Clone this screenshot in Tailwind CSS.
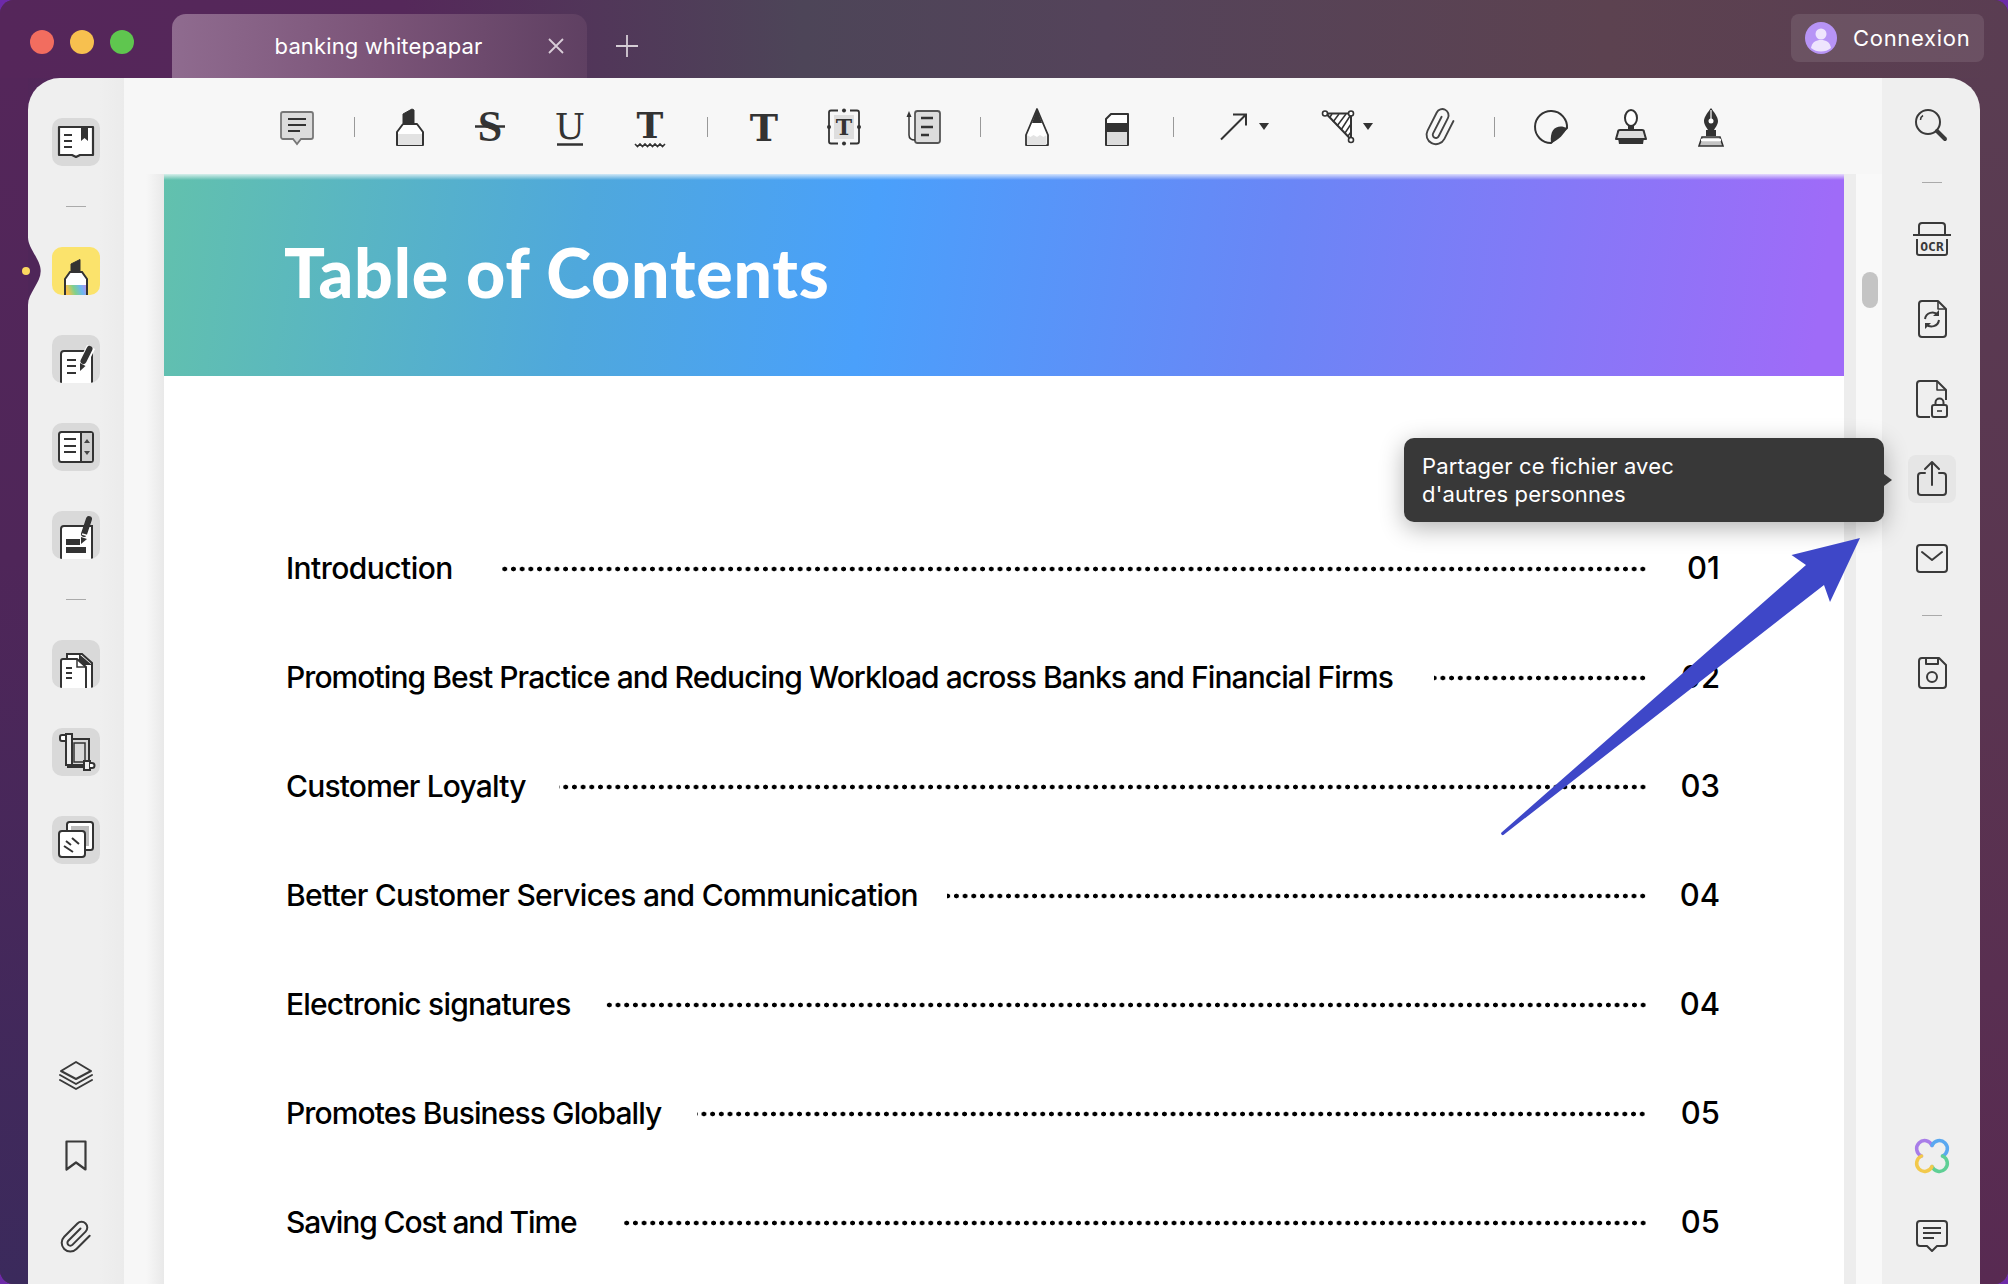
<!DOCTYPE html>
<html lang="en">
<head>
  <meta charset="UTF-8" />
  <title>banking whitepapar</title>
  <script src="https://cdn.jsdelivr.net/npm/@tailwindcss/browser@4"></script>
</head>
<body class="w-[2008px] h-[1284px] overflow-hidden bg-[#6d2aa8] font-['Inter',sans-serif]">
<div class="relative w-full h-full rounded-[14px] overflow-hidden flex flex-col bg-[#52265a]">

  <!-- title bar -->
  <header class="h-[78px] shrink-0 flex items-start bg-[linear-gradient(90deg,#55265a_0%,#55285a_20%,#4d4558_40%,#54435a_55%,#5c4250_80%,#5a3d52_100%)]">
    <div class="flex gap-[16px] mt-[30px] ml-[30px]">
      <span class="w-[24px] h-[24px] rounded-full bg-[#f26d5f]"></span>
      <span class="w-[24px] h-[24px] rounded-full bg-[#f7c04f]"></span>
      <span class="w-[24px] h-[24px] rounded-full bg-[#5fc64f]"></span>
    </div>
    <div class="relative ml-[38px] mt-[14px] w-[415px] h-[64px] rounded-t-[14px] bg-[linear-gradient(90deg,#8f6b8f_0%,#7b5478_50%,#5f4062_100%)] flex items-center justify-center">
      <span class="text-white text-[22px] leading-none -mt-[1px] -ml-[2px] tracking-[0.12px]">banking whitepapar</span>
      <svg class="absolute left-[375px] top-[22px]" width="18" height="20" viewBox="0 0 18 20" fill="none" stroke="#d9cdd8" stroke-width="1.8"><path d="M2 3l14 14M16 3L2 17"/></svg>
    </div>
    <svg class="ml-[28px] mt-[34px]" width="24" height="24" viewBox="0 0 24 24" fill="none" stroke="#d5cdd5" stroke-width="1.8"><path d="M12 1v22M1 12h22"/></svg>
    <div class="ml-auto mr-[24px] mt-[14px] w-[193px] h-[48px] rounded-[8px] bg-white/10 flex items-center pl-[14px]">
      <svg width="32" height="32" viewBox="0 0 32 32"><circle cx="16" cy="16" r="16" fill="#b794f6"/><circle cx="16" cy="12" r="5.5" fill="#eee4fd"/><path d="M6 26c1-6 5-8 10-8s9 2 10 8a16 16 0 0 1-20 0z" fill="#eee4fd"/></svg>
      <span class="ml-[16px] text-white text-[22px] tracking-[0.7px]">Connexion</span>
    </div>
  </header>

  <div class="flex-1 flex min-h-0 bg-[linear-gradient(90deg,#52265a,#5a3d52)]">
    <div class="w-[28px] shrink-0 bg-[linear-gradient(180deg,#54265a_0%,#4f2659_40%,#3b2a5c_100%)]"></div>

    <div class="flex-1 flex min-w-0 rounded-t-[32px] overflow-hidden">
      <!-- left sidebar -->
      <aside class="w-[96px] shrink-0 bg-[linear-gradient(90deg,#efefef_75%,#ebebeb_100%)] flex flex-col items-center pt-[40px] pb-[23px]">
        <div class="flex flex-col items-center gap-[40px]">
          <div class="w-[48px] h-[48px] rounded-[10px] bg-[#d9d9d9] overflow-hidden">
            <svg width="48" height="48" viewBox="0 0 48 48"><path d="M7 9h34v28H28l-4 2-4-2H7z" fill="#fff" stroke="#333" stroke-width="2.2" stroke-linejoin="round"/><path d="M12 17h8M12 23h8M12 29h8" stroke="#333" stroke-width="2.2"/><path d="M29 9v14l3.5-3 3.5 3V9z" fill="#333"/></svg>
          </div>
          <div class="w-[20px] h-[1px] bg-[#aaaaaa]"></div>
          <div class="w-[48px] h-[48px] rounded-[10px] bg-[#fbe36c] overflow-hidden">
            <svg width="48" height="48" viewBox="0 0 48 48"><defs><linearGradient id="rb" x1="0" x2="1" y1="0.2" y2="0"><stop offset="0" stop-color="#f5c04d"/><stop offset=".35" stop-color="#7fd18c"/><stop offset=".7" stop-color="#6cb7f0"/><stop offset="1" stop-color="#b390f0"/></linearGradient></defs><path d="M13 50V32l5-7h12l5 7v18z" fill="#fff" stroke="#333" stroke-width="2"/><rect x="14" y="38" width="20" height="11" fill="url(#rb)"/><path d="M19 24v-7l9-4.500v11.500z" fill="#333" stroke="#333" stroke-linejoin="round"/></svg>
          </div>
          <div class="w-[48px] h-[48px] rounded-[10px] bg-[#d9d9d9] overflow-hidden">
            <svg width="48" height="48" viewBox="0 0 48 48"><path d="M9 50V19a3 3 0 0 1 3-3h28v34z" fill="#fff" stroke="#333" stroke-width="2"/><path d="M15 25h9M15 31h9M15 38h9" stroke="#333" stroke-width="2"/><path d="M39 12l-8 16" stroke="#fff" stroke-width="9"/><path d="M37.500 14l-6 12" stroke="#333" stroke-width="6" stroke-linecap="round"/><path d="M28 28l5.500 3-5.500 5z" fill="#333"/></svg>
          </div>
          <div class="w-[48px] h-[48px] rounded-[10px] bg-[#d9d9d9] overflow-hidden">
            <svg width="48" height="48" viewBox="0 0 48 48"><rect x="7" y="9" width="34" height="30" rx="2.500" fill="#fff" stroke="#333" stroke-width="2"/><path d="M29 10h11v28H29z" fill="#cfcfcf"/><path d="M29 9v30" stroke="#333" stroke-width="2"/><path d="M12 16h12M12 23h12M12 29h12" stroke="#333" stroke-width="2"/><path d="M35 16l3 4h-6zM35 32l-3-4h6z" fill="#444"/></svg>
          </div>
          <div class="w-[48px] h-[48px] rounded-[10px] bg-[#d9d9d9] overflow-hidden">
            <svg width="48" height="48" viewBox="0 0 48 48"><path d="M9 50V18a3 3 0 0 1 3-3h28v35z" fill="#fff" stroke="#333" stroke-width="2"/><path d="M14 28h14v6H14zM14 36h20v6H14z" fill="#333"/><path d="M37 8l-5 15" stroke="#333" stroke-width="6" stroke-linecap="round"/><path d="M29 26l6 2-6 5z" fill="#333"/><path d="M30 23l7 2" stroke="#fff" stroke-width="1.500"/></svg>
          </div>
          <div class="w-[20px] h-[1px] bg-[#aaaaaa]"></div>
          <div class="w-[48px] h-[48px] rounded-[10px] bg-[#d9d9d9] overflow-hidden">
            <svg width="48" height="48" viewBox="0 0 48 48"><path d="M15 50V14h15l10 9v27z" fill="#fff" stroke="#333" stroke-width="2"/><path d="M27 14l13 11H27z" fill="#333"/><path d="M9 50V21a2 2 0 0 1 2-2h14l9 8v23z" fill="#fff" stroke="#333" stroke-width="2"/><path d="M25 19v8h9" fill="none" stroke="#333" stroke-width="1.500"/><path d="M14 28h6M14 33h6M14 38h6" stroke="#333" stroke-width="2"/></svg>
          </div>
          <div class="w-[48px] h-[48px] rounded-[10px] bg-[#d9d9d9] overflow-hidden">
            <svg width="48" height="48" viewBox="0 0 48 48" fill="none" stroke="#333" stroke-width="2"><path d="M8 9a2 2 0 0 1 2-2h6v6h-6a2 2 0 0 1-2-2z" fill="#fff"/><path d="M19 11h18v28H15" /><path d="M22 15h11v19H22z" stroke-width="1.500"/><path d="M14 6h6v31h-6z" fill="#efefef"/><path d="M32 33h6v9h-6z" fill="#efefef"/><path d="M38 35h2a2 2 0 0 1 0 5h-2" fill="#fff"/><path d="M20 37h12" /></svg>
          </div>
          <div class="w-[48px] h-[48px] rounded-[10px] bg-[#d9d9d9] overflow-hidden">
            <svg width="48" height="48" viewBox="0 0 48 48" fill="none" stroke="#333" stroke-width="2"><rect x="15" y="6" width="26" height="28" rx="2.500" fill="#fff"/><rect x="19" y="10" width="18" height="20" fill="#bdbdbd" stroke="none"/><rect x="7" y="15" width="26" height="26" rx="3" fill="#fff"/><path d="M14 25l5 4M12 30l9 6M20 22l7 6"/></svg>
          </div>
        </div>
        <div class="mt-auto flex flex-col items-center gap-[32px]">
          <svg width="48" height="48" viewBox="0 0 48 48" fill="none" stroke="#3a3a3a" stroke-width="2" stroke-linejoin="round"><path d="M24 9l15 9-15 8-15-8z"/><path d="M8 22l16 9 16-9M8 27l16 9 16-9" stroke-linecap="round"/></svg>
          <svg width="48" height="48" viewBox="0 0 48 48" fill="none" stroke="#3a3a3a" stroke-width="2.200" stroke-linejoin="round"><path d="M14.500 8.500h19v28L24 29.500l-9.500 7z"/></svg>
          <svg width="48" height="48" viewBox="0 0 24 24" fill="none" stroke="#3a3a3a" stroke-width="1.400" stroke-linecap="round" stroke-linejoin="round"><g transform="translate(3.400 3.400) scale(.72)"><path d="M21.440 11.050l-9.190 9.190a6 6 0 0 1-8.490-8.490l9.190-9.190a4 4 0 0 1 5.660 5.660l-9.200 9.190a2 2 0 0 1-2.830-2.830l8.490-8.480"/></g></svg>
        </div>
      </aside>

      <!-- main column -->
      <div class="flex-1 min-w-0 flex flex-col bg-[#f7f7f7]">
        <!-- annotation toolbar -->
        <div class="relative z-10 h-[96px] shrink-0 flex items-center pl-[133px] pt-[2px] bg-[#f7f7f7]">
          <div class="w-[80px] flex justify-center">
            <svg width="48" height="48" viewBox="0 0 48 48"><path d="M10 9h28a2 2 0 0 1 2 2v23a2 2 0 0 1-2 2H28l-4 5-4-5H10a2 2 0 0 1-2-2V11a2 2 0 0 1 2-2z" fill="#dcdcdc" stroke="#777" stroke-width="1.800"/><path d="M15 16h18M15 22h18M15 28h12" stroke="#333" stroke-width="2"/></svg>
          </div>
          <div class="ml-[17px] w-[1px] h-[20px] bg-[#999]"></div>
          <div class="ml-[15px] w-[80px] flex justify-center">
            <svg width="48" height="48" viewBox="0 0 48 48"><path d="M11 42V29l6-8h14l6 8v13z" fill="#fff" stroke="#333" stroke-width="2" stroke-linejoin="round"/><path d="M12 31h24v11H12z" fill="#e3e3e3"/><path d="M11 30v12M37 30v12" stroke="#333" stroke-width="2"/><path d="M17 20v-9l9-5 2 1v13z" fill="#333" stroke="#333" stroke-linejoin="round"/></svg>
          </div>
          <div class="w-[80px] flex justify-center">
            <svg width="48" height="48" viewBox="0 0 48 48"><text x="24" y="38" text-anchor="middle" font-family="Liberation Serif" font-weight="700" font-size="44" fill="#333">S</text><path d="M9 23.500h30" stroke="#333" stroke-width="2.500"/></svg>
          </div>
          <div class="w-[80px] flex justify-center">
            <svg width="48" height="48" viewBox="0 0 48 48"><text x="24" y="36" text-anchor="middle" font-family="DejaVu Serif" font-size="36" fill="#333">U</text><path d="M11 41.500h26" stroke="#333" stroke-width="2.500"/></svg>
          </div>
          <div class="w-[80px] flex justify-center">
            <svg width="48" height="48" viewBox="0 0 48 48"><text x="24" y="35" text-anchor="middle" font-family="DejaVu Serif" font-size="36" fill="#333" font-weight="700">T</text><path d="M9 41l2.500 2.500 2.500-2.500 2.500 2.500 2.500-2.500 2.500 2.500 2.500-2.500 2.500 2.500 2.500-2.500 2.500 2.500 2.500-2.500 2.500 2.500 2.500-2.500" fill="none" stroke="#333" stroke-width="1.600"/></svg>
          </div>
          <div class="ml-[17px] w-[1px] h-[20px] bg-[#999]"></div>
          <div class="ml-[16px] w-[80px] flex justify-center">
            <svg width="48" height="48" viewBox="0 0 48 48"><text x="24" y="37.500" text-anchor="middle" font-family="DejaVu Serif" font-size="38" fill="#333" font-weight="700">T</text></svg>
          </div>
          <div class="w-[80px] flex justify-center">
            <svg width="48" height="48" viewBox="0 0 48 48"><path d="M18 7.500h-7a2 2 0 0 0-2 2v29a2 2 0 0 0 2 2h7M30 7.500h7a2 2 0 0 1 2 2v29a2 2 0 0 1-2 2h-7" fill="none" stroke="#333" stroke-width="1.800"/><rect x="14" y="12" width="20" height="24" fill="#dedede"/><circle cx="24" cy="7.500" r="2" fill="#333"/><circle cx="24" cy="40.500" r="2" fill="#333"/><circle cx="9" cy="24" r="2" fill="#333"/><circle cx="39" cy="24" r="2" fill="#333"/><text x="24" y="32" text-anchor="middle" font-family="DejaVu Serif" font-size="22" fill="#333" font-weight="700">T</text></svg>
          </div>
          <div class="w-[80px] flex justify-center">
            <svg width="48" height="48" viewBox="0 0 48 48"><rect x="15" y="8" width="25" height="32" rx="2.500" fill="#dcdcdc" stroke="#555" stroke-width="1.800"/><path d="M21 15h12M21 24h12M21 32h8" stroke="#333" stroke-width="2.400"/><path d="M9 13v19q0 5 6 5" fill="none" stroke="#333" stroke-width="1.500"/><path d="M9 8l-2.500 6h5z" fill="#333"/></svg>
          </div>
          <div class="ml-[16px] w-[1px] h-[20px] bg-[#999]"></div>
          <div class="ml-[16px] w-[80px] flex justify-center">
            <svg width="48" height="48" viewBox="0 0 48 48"><path d="M13 42V32l11-26 11 26v10z" fill="#fff" stroke="#333" stroke-width="1.800" stroke-linejoin="round"/><path d="M14 32l3.500 2 3-2 3.500 2 3-2 3.500 2 3-2v10H14z" fill="#e3e3e3"/><path d="M19 20L24 6l5 14z" fill="#333"/></svg>
          </div>
          <div class="w-[80px] flex justify-center">
            <svg width="48" height="48" viewBox="0 0 48 48"><path d="M13 42V16l5-5h17v31z" fill="#fff" stroke="#333" stroke-width="2" stroke-linejoin="round"/><path d="M14 29h20v13H14z" fill="#dcdcdc"/><path d="M13 20h22v9H13z" fill="#333"/><path d="M13 29v13M35 29v13" stroke="#333" stroke-width="2"/></svg>
          </div>
          <div class="ml-[16px] w-[1px] h-[20px] bg-[#999]"></div>
          <svg class="ml-[42px]" width="60" height="48" viewBox="0 0 60 48" fill="none"><path d="M5 36.500L30 11.500M17 11.500h13v11" stroke="#333" stroke-width="2"/><path d="M43 20h10l-5 7z" fill="#333"/></svg>
          <svg class="ml-[44px]" width="60" height="48" viewBox="0 0 60 48" fill="none"><path d="M6 10.500h25v26z" fill="#fff"/><path d="M12 11l-2 3M19 11l-6 8M26 11l-9 12M30 13L21 27M31 21l-6 9M31 29l-3 4" stroke="#333" stroke-width="1.500"/><path d="M6 10.500h25v26z" stroke="#333" stroke-width="2" stroke-linejoin="round"/><circle cx="5" cy="10.500" r="2.500" fill="#fff" stroke="#333" stroke-width="1.600"/><circle cx="31" cy="10.500" r="2.500" fill="#fff" stroke="#333" stroke-width="1.600"/><circle cx="31" cy="37" r="2.500" fill="#fff" stroke="#333" stroke-width="1.600"/><path d="M43 20h10l-5 7z" fill="#333"/></svg>
          <div class="ml-[20px] w-[80px] flex justify-center">
            <svg width="48" height="48" viewBox="0 0 24 24" fill="none" stroke="#444" stroke-width="1.200" stroke-linecap="round" stroke-linejoin="round"><g transform="rotate(-18 12 12) translate(2.600 2.600) scale(.78)"><path d="M21.440 11.050l-9.190 9.190a6 6 0 0 1-8.490-8.490l9.190-9.190a4 4 0 0 1 5.660 5.660l-9.200 9.190a2 2 0 0 1-2.830-2.830l8.490-8.480"/></g></svg>
          </div>
          <div class="ml-[14px] w-[1px] h-[20px] bg-[#999]"></div>
          <div class="ml-[16px] w-[80px] flex justify-center">
            <svg width="48" height="48" viewBox="0 0 48 48"><path d="M40 25A16 16 0 1 0 24 40z" fill="none" stroke="#333" stroke-width="2"/><path d="M24 40c8-3 13-9 16-15-8-4-18-1-16 15z" fill="#333"/></svg>
          </div>
          <div class="w-[80px] flex justify-center">
            <svg width="48" height="48" viewBox="0 0 48 48"><ellipse cx="24" cy="15" rx="6" ry="8" fill="#fff" stroke="#333" stroke-width="2"/><path d="M21 22h6v5h-6z" fill="#333"/><path d="M11 29a2 2 0 0 1 2-2h22a2 2 0 0 1 2 2l2 7H9z" fill="#dcdcdc" stroke="#333" stroke-width="2" stroke-linejoin="round"/><path d="M11 35h26l-1 6H12z" fill="#333"/></svg>
          </div>
          <div class="w-[80px] flex justify-center">
            <svg width="48" height="48" viewBox="0 0 48 48"><path d="M24 5c-3 4-7 9-7 13 0 4 3 7 4 9h6c1-2 4-5 4-9 0-4-4-9-7-13z" fill="#333"/><path d="M24 7v9" stroke="#fff" stroke-width="1.200"/><circle cx="24" cy="18" r="2.500" fill="#fff"/><path d="M19 27h10v6H19z" fill="#333"/><path d="M15 34h18l3 9H12z" fill="#c4c4c4" stroke="#333" stroke-width="1.600"/><path d="M14 37h20" stroke="#fff" stroke-width="2.500"/></svg>
          </div>
        </div>

        <!-- page area -->
        <div class="flex-1 min-h-0 flex">
          <div class="w-[40px] shrink-0 bg-[linear-gradient(90deg,#f7f7f7_55%,#e9e9e9_100%)]"></div>
          <main class="w-[1680px] shrink-0 bg-white overflow-hidden">
            <div class="h-[202px] flex items-center pl-[120px] pb-[6px] bg-[linear-gradient(180deg,rgba(255,255,255,.75)_0,rgba(255,255,255,0)_6px),linear-gradient(98deg,#62c1ad_0%,#4fa8dc_25%,#4aa0fb_42%,#6a86f6_66%,#9f6bf8_98%)]">
              <h1 class="text-white text-[68px] font-black leading-none tracking-[0.8px] font-['Lato',sans-serif]">Table of Contents</h1>
            </div>
            <div class="pt-[138px] pl-[122px] pr-[124px] text-black text-[30px] font-medium">
              <div class="h-[109px] flex items-center"><span class="tracking-[-0.55px]">Introduction</span><span class="ml-[47px] flex-1 h-[8px] bg-[radial-gradient(circle,#000_2.100px,transparent_2.700px)] bg-[length:8.700px_8px] bg-right"></span><span class="w-[73px] text-right text-[31px]">01</span></div>
              <div class="h-[109px] flex items-center"><span class="tracking-[-0.93px]">Promoting Best Practice and Reducing Workload across Banks and Financial Firms</span><span class="ml-[41px] flex-1 h-[8px] bg-[radial-gradient(circle,#000_2.100px,transparent_2.700px)] bg-[length:8.700px_8px] bg-right"></span><span class="w-[73px] text-right text-[31px]">02</span></div>
              <div class="h-[109px] flex items-center"><span class="tracking-[-0.82px]">Customer Loyalty</span><span class="ml-[33px] flex-1 h-[8px] bg-[radial-gradient(circle,#000_2.100px,transparent_2.700px)] bg-[length:8.700px_8px] bg-right"></span><span class="w-[73px] text-right text-[31px]">03</span></div>
              <div class="h-[109px] flex items-center"><span class="tracking-[-0.72px]">Better Customer Services and Communication</span><span class="ml-[29px] flex-1 h-[8px] bg-[radial-gradient(circle,#000_2.100px,transparent_2.700px)] bg-[length:8.700px_8px] bg-right"></span><span class="w-[73px] text-right text-[31px]">04</span></div>
              <div class="h-[109px] flex items-center"><span class="tracking-[-0.8px]">Electronic signatures</span><span class="ml-[33px] flex-1 h-[8px] bg-[radial-gradient(circle,#000_2.100px,transparent_2.700px)] bg-[length:8.700px_8px] bg-right"></span><span class="w-[73px] text-right text-[31px]">04</span></div>
              <div class="h-[109px] flex items-center"><span class="tracking-[-0.9px]">Promotes Business Globally</span><span class="ml-[36px] flex-1 h-[8px] bg-[radial-gradient(circle,#000_2.100px,transparent_2.700px)] bg-[length:8.700px_8px] bg-right"></span><span class="w-[73px] text-right text-[31px]">05</span></div>
              <div class="h-[109px] flex items-center"><span class="tracking-[-1.12px]">Saving Cost and Time</span><span class="ml-[44px] flex-1 h-[8px] bg-[radial-gradient(circle,#000_2.100px,transparent_2.700px)] bg-[length:8.700px_8px] bg-right"></span><span class="w-[73px] text-right text-[31px]">05</span></div>
            </div>
          </main>
          <!-- scroll track -->
          <div class="flex-1 flex bg-[#f9f9f9]">
            <div class="w-[12px] shrink-0 bg-[#ededed]"></div>
            <div class="flex-1 pt-[98px] pl-[6px]">
              <div class="w-[16px] h-[36px] rounded-[8px] bg-[#c4c4c4]"></div>
            </div>
          </div>
        </div>
      </div>

      <!-- right sidebar -->
      <aside class="w-[98px] shrink-0 bg-[#efefef] flex flex-col items-center pt-[24px] pb-[24px] pl-[2px]">
        <div class="flex flex-col items-center gap-[32px]">
          <svg width="48" height="48" viewBox="0 0 48 48" fill="none" stroke="#3a3a3a"><circle cx="20" cy="20" r="12" stroke-width="2"/><path d="M12.500 18q0-3 2.500-4.500" stroke-width="1.500"/><path d="M29 29l8 8" stroke-width="4" stroke-linecap="round"/></svg>
          <div class="w-[20px] h-[1px] bg-[#aaaaaa]"></div>
          <svg width="48" height="48" viewBox="0 0 48 48" fill="none" stroke="#3a3a3a" stroke-width="2"><path d="M11 20v-9a3 3 0 0 1 3-3h20a3 3 0 0 1 3 3v9M5 20h38M9 24v14a2 2 0 0 0 2 2h26a2 2 0 0 0 2-2V24"/><text x="24" y="35.500" text-anchor="middle" font-family="DejaVu Sans Mono" font-size="13" font-weight="700" fill="#3a3a3a" stroke="none">OCR</text></svg>
          <svg width="48" height="48" viewBox="0 0 48 48" fill="none" stroke="#3a3a3a" stroke-width="2" stroke-linejoin="round"><path d="M14 6h16l8 8v25a3 3 0 0 1-3 3H14a3 3 0 0 1-3-3V9a3 3 0 0 1 3-3z"/><path d="M30 6v8h8" stroke-width="1.600"/><path d="M17 24a7.500 7.500 0 0 1 13-4M31 25a7.500 7.500 0 0 1-13 4"/><path d="M31 15v6h-6zM17 34v-6h6z" fill="#3a3a3a" stroke="none"/></svg>
          <svg width="48" height="48" viewBox="0 0 48 48" fill="none" stroke="#3a3a3a" stroke-width="2" stroke-linejoin="round"><path d="M22 42H12a3 3 0 0 1-3-3V9a3 3 0 0 1 3-3h17l9 9v10"/><path d="M29 6v9h9" stroke-width="1.600"/><rect x="24" y="30" width="15" height="12" rx="2"/><path d="M27.500 30v-2.500a4 4 0 0 1 8 0V30"/><path d="M29 36h5" stroke-width="1.600"/></svg>
          <div class="w-[48px] h-[48px] rounded-[8px] bg-[#e6e6e6]">
            <svg width="48" height="48" viewBox="0 0 48 48" fill="none" stroke="#3a3a3a" stroke-width="2" stroke-linecap="round" stroke-linejoin="round"><path d="M17 18h-4a3 3 0 0 0-3 3v16a3 3 0 0 0 3 3h22a3 3 0 0 0 3-3V21a3 3 0 0 0-3-3h-4"/><path d="M24 7v23M17 14l7-7 7 7"/></svg>
          </div>
          <svg width="48" height="48" viewBox="0 0 48 48" fill="none" stroke="#3a3a3a" stroke-width="2" stroke-linejoin="round"><rect x="9" y="10" width="30" height="27" rx="3"/><path d="M14 17l10 8 10-8" stroke-linecap="round"/></svg>
          <div class="w-[20px] h-[1px] bg-[#aaaaaa]"></div>
          <svg width="48" height="48" viewBox="0 0 48 48" fill="none" stroke="#3a3a3a" stroke-width="2" stroke-linejoin="round"><path d="M14 10h17l7 7v20a3 3 0 0 1-3 3H14a3 3 0 0 1-3-3V13a3 3 0 0 1 3-3z"/><path d="M18 10v6h12v-6"/><circle cx="24" cy="29" r="5"/></svg>
        </div>
        <div class="mt-auto flex flex-col items-center gap-[32px]">
          <svg width="48" height="48" viewBox="0 0 48 48" fill="none" stroke-width="3.500" stroke-linecap="round"><path d="M13.500 24A8 8 0 1 1 24 13.500" stroke="#a87de8"/><path d="M24 13.500A8 8 0 1 1 34.500 24" stroke="#5aa8f0"/><path d="M34.500 24A8 8 0 1 1 24 34.500" stroke="#5fcf95"/><path d="M24 34.500A8 8 0 1 1 13.500 24" stroke="#f2c94c"/></svg>
          <svg width="48" height="48" viewBox="0 0 48 48" fill="none" stroke="#3a3a3a" stroke-width="2" stroke-linejoin="round"><path d="M12 9h24a3 3 0 0 1 3 3v19a3 3 0 0 1-3 3h-7l-5 5-5-5h-7a3 3 0 0 1-3-3V12a3 3 0 0 1 3-3z"/><path d="M15 16h18M15 21h18M15 26h11"/></svg>
        </div>
      </aside>
    </div>

    <div class="w-[28px] shrink-0 bg-[linear-gradient(180deg,#5a3d52_0%,#5a3450_50%,#582a52_100%)]"></div>
  </div>

  <!-- active-tool notch cut into the left sidebar -->
  <svg class="absolute left-[28px] top-[237px] overflow-visible" width="14" height="68" viewBox="0 0 14 68"><path d="M0 0C0 12 12.700 22 12.700 34 12.700 46 0 56 0 68z" fill="#4f2659"/><circle cx="-2" cy="34" r="4" fill="#fbd860"/></svg>

  <!-- tooltip over the share button -->
  <div class="absolute left-[1404px] top-[438px] w-[480px] h-[84px] rounded-[10px] bg-[#383838] shadow-[0_6px_24px_rgba(0,0,0,0.3)] pl-[18px] pt-[14px] text-white text-[22px] leading-[28px] tracking-[0.16px]">
    <p>Partager ce fichier avec</p>
    <p>d'autres personnes</p>
    <span class="absolute left-full top-[36px] w-0 h-0 border-y-[6px] border-y-transparent border-l-[8px] border-l-[#383838]"></span>
  </div>

  <!-- annotation arrow on the screenshot -->
  <svg class="absolute left-0 top-0 pointer-events-none" width="2008" height="1284" viewBox="0 0 2008 1284"><path d="M1860 538L1791.500 555 1806 565 1501.500 832.500a1.500 1.500 0 0 0 2.500 2L1824 585 1830 602z" fill="#3e47c8"/></svg>
</div>
</body>
</html>
